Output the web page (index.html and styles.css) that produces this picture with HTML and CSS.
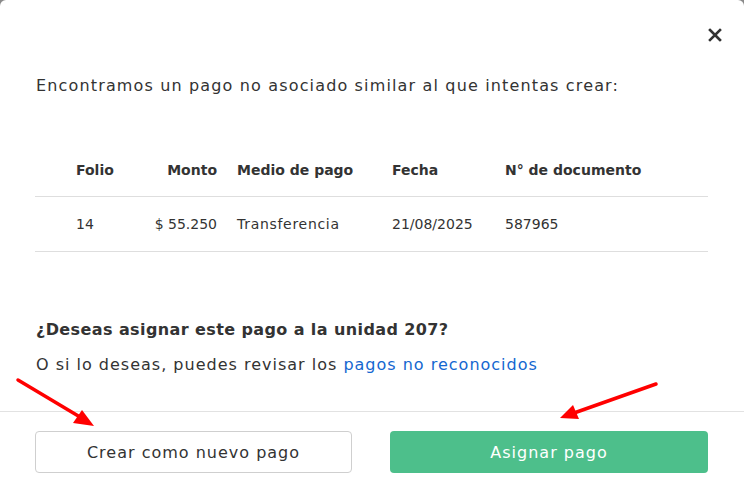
FILE: index.html
```html
<!DOCTYPE html>
<html lang="es">

<head>
  <meta charset="UTF-8">
  <meta name="viewport" content="width=device-width, initial-scale=1.0">
  <title>Pago similar</title>
  <link rel="stylesheet" href="styles.css">
</head>

<body>
  <div class="modal">
    <div class="modal-header">
      <button class="close-button" aria-label="Cerrar">
        <svg width="14" height="14" viewBox="0 0 14 14">
          <path d="M2 2 L12 12 M12 2 L2 12" stroke="#333" stroke-width="2.6" stroke-linecap="square" />
        </svg>
      </button>
    </div>

    <div class="modal-body">
      <p class="intro">Encontramos un pago no asociado similar al que intentas crear:</p>

      <table class="payments">
        <colgroup>
          <col class="col-folio">
          <col class="col-monto">
          <col class="col-medio">
          <col class="col-fecha">
          <col class="col-doc">
        </colgroup>
        <thead>
          <tr>
            <th class="folio">Folio</th>
            <th class="amount">Monto</th>
            <th>Medio de pago</th>
            <th>Fecha</th>
            <th>N° de documento</th>
          </tr>
        </thead>
        <tbody>
          <tr>
            <td class="folio">14</td>
            <td class="amount">$ 55.250</td>
            <td class="method">Transferencia</td>
            <td>21/08/2025</td>
            <td>587965</td>
          </tr>
        </tbody>
      </table>

      <p class="question">¿Deseas asignar este pago a la unidad 207?</p>
      <p class="hint">O si lo deseas, puedes revisar los <a href="#" class="link">pagos no reconocidos</a></p>
    </div>

    <div class="modal-footer">
      <button class="secondary-button">Crear como nuevo pago</button>
      <button class="primary-button">Asignar pago</button>
    </div>

    <!-- red annotation arrows -->
    <svg class="arrows" width="744" height="490" viewBox="0 0 744 490">
      <line x1="18" y1="380" x2="80" y2="417" stroke="#f00" stroke-width="3.5" stroke-linecap="round" />
      <polygon points="94,426 73,423 82,410" fill="#f00" />
      <line x1="656" y1="384" x2="574" y2="413" stroke="#f00" stroke-width="3.5" stroke-linecap="round" />
      <polygon points="560,418 573,405 579,419" fill="#f00" />
    </svg>
  </div>
</body>

</html>
```

FILE: styles.css
```css
body {
  font-family: "DejaVu Sans", "Open Sans", Arial, sans-serif;
  margin: 0;
  padding: 0;
  background-color: #8a8a8a;
  color: #333;
}

.modal {
  position: relative;
  width: 744px;
  height: 490px;
  background-color: white;
  border-radius: 6px 6px 0 0;
  overflow: hidden;
}

.modal-header {
  height: 69px;
  display: flex;
  justify-content: flex-end;
  align-items: center;
  padding-right: 22px;
}

.close-button {
  background: none;
  border: none;
  padding: 0;
  width: 14px;
  height: 14px;
  cursor: pointer;
}

.close-button svg {
  display: block;
}

.modal-body {
  padding: 0 36px 31px 35px;
}

.intro {
  margin: 0;
  font-size: 16px;
  letter-spacing: 1.15px;
  line-height: 34px;
  padding-left: 1px;
}

.payments {
  width: 100%;
  margin-top: 41px;
  border-collapse: collapse;
  table-layout: fixed;
  font-size: 14px;
}

.col-folio {
  width: 92px;
}

.col-monto {
  width: 100px;
}

.col-medio {
  width: 155px;
}

.col-fecha {
  width: 113px;
}

.payments th,
.payments td {
  text-align: left;
  padding: 0 10px;
  white-space: nowrap;
}

.payments th {
  height: 52px;
  font-weight: bold;
  border-bottom: 1px solid #dedede;
}

.payments td {
  height: 54px;
  border-bottom: 1px solid #dedede;
}

.payments .folio {
  padding-left: 41px;
}

.payments .amount {
  text-align: right;
}

.payments .method {
  letter-spacing: 0.7px;
}

.question {
  margin: 63px 0 0;
  padding-left: 1px;
  font-size: 16px;
  font-weight: bold;
  letter-spacing: 0.4px;
  line-height: 30px;
}

.hint {
  margin: 5px 0 0;
  padding-left: 1px;
  font-size: 16px;
  letter-spacing: 1px;
  line-height: 30px;
}

.link {
  color: #1467d0;
  text-decoration: none;
}

.modal-footer {
  border-top: 1px solid #e2e2e2;
  padding: 19px 36px 0 35px;
  display: grid;
  grid-template-columns: 317px 318px;
  justify-content: space-between;
}

.secondary-button,
.primary-button {
  height: 42px;
  font-family: inherit;
  font-size: 16px;
  letter-spacing: 1px;
  border-radius: 4px;
  cursor: pointer;
}

.secondary-button {
  background-color: white;
  color: #333;
  border: 1px solid #cfcfcf;
}

.primary-button {
  background-color: #4dbf8b;
  color: white;
  border: none;
}

.arrows {
  position: absolute;
  left: 0;
  top: 0;
  pointer-events: none;
}
```
